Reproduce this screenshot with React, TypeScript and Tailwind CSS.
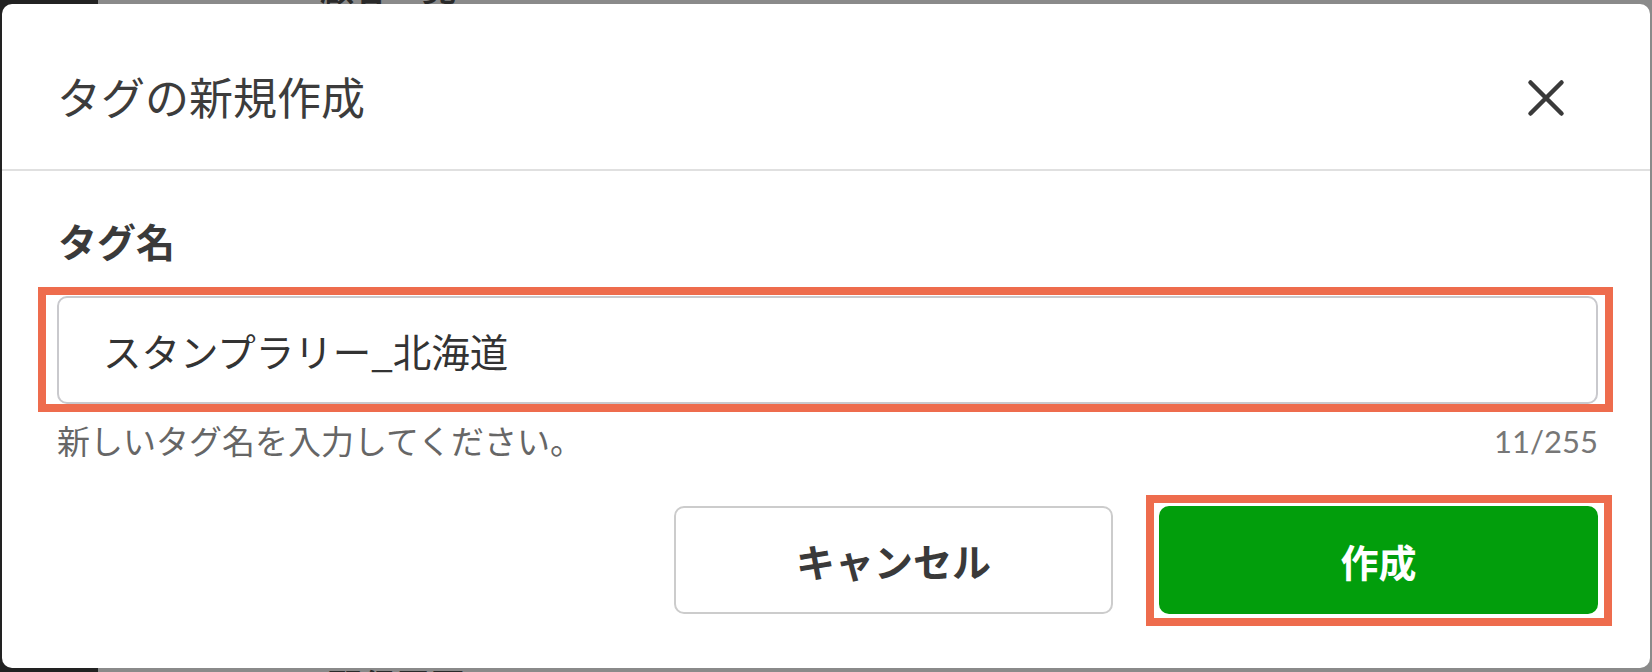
import React from "react";

/**
 * "Create tag" dialog, shown over a dimmed page. The orange frames are
 * review annotations drawn round the input and the primary button.
 */

function CloseIcon() {
  return (
    <svg width="40" height="40" viewBox="0 0 40 40" aria-hidden="true">
      <path
        d="M4.5 4.5 L35.5 35.5 M35.5 4.5 L4.5 35.5"
        stroke="#3a3a3a"
        strokeWidth="4.5"
        strokeLinecap="round"
        fill="none"
      />
    </svg>
  );
}

export default function App() {
  const value = "スタンプラリー_北海道";

  return (
    <div className="relative h-[672px] w-[1652px] overflow-hidden font-['Noto_Sans_CJK_JP','Noto_Sans',sans-serif]">
      {/* dimmed page behind the dialog */}
      <div className="flex h-full">
        <div className="w-[98px] bg-[#222222]" />
        <div className="flex flex-1 flex-col justify-between bg-[#8a8a8a]">
          <div className="-mt-[30px] flex pl-[222px] text-[34px] font-bold leading-none text-[#2a2a2a]">
            <span>顧客一覧</span>
          </div>
          <div className="-mb-[30px] flex pl-[230px] text-[34px] font-bold leading-none text-[#2a2a2a]">
            <span>配信履歴</span>
          </div>
        </div>
      </div>

      {/* dialog */}
      <div className="absolute left-[2px] top-[4px] flex h-[664px] w-[1648px] flex-col rounded-[10px] bg-white">
        <header className="flex h-[167px] shrink-0 items-center justify-between border-b-2 border-[#e0e0e0] pl-[55px] pr-[84px] pt-[12px]">
          <h2 className="mt-[6px] text-[44px] font-normal leading-none text-[#3c3c3c]">
            タグの新規作成
          </h2>
          <button type="button" className="mt-[10px] flex items-center justify-center">
            <CloseIcon />
          </button>
        </header>

        <div className="flex flex-1 flex-col pl-[55px] pr-[52px] pt-[50px]">
          <label className="pl-[1px] text-[39px] font-bold leading-none text-[#3a3a3a]">
            タグ名
          </label>

          <div className="relative mt-[36px]">
            <input
              readOnly
              value={value}
              className="block h-[108px] w-full rounded-[10px] border-2 border-[#c9c9cd] bg-white pl-[44px] text-[38.5px] text-[#333333] outline-none"
            />
            <span className="pointer-events-none absolute -bottom-[8px] -left-[19px] -right-[15px] -top-[9px] border-[8px] border-[#ee6c4d]" />
          </div>

          <div className="mt-[20px] flex items-start justify-between">
            <p className="text-[33px] leading-none text-[#666666]">
              新しいタグ名を入力してください。
            </p>
            <span className="mt-[2px] font-['Lato','Noto_Sans',sans-serif] text-[31px] leading-none text-[#777777]">
              {value.length}/255
            </span>
          </div>

          <div className="mt-[49px] flex justify-end gap-[46px]">
            <button
              type="button"
              className="flex h-[108px] w-[439px] items-center justify-center rounded-[10px] border-2 border-[#cccccc] bg-white text-[39px] font-bold text-[#3a3a3a]"
            >
              キャンセル
            </button>
            <div className="relative">
              <button
                type="button"
                className="flex h-[108px] w-[439px] items-center justify-center rounded-[10px] bg-[#029e0c] text-[38px] font-bold text-white"
              >
                作成
              </button>
              <span className="pointer-events-none absolute -bottom-[12px] -left-[13px] -right-[14px] -top-[11px] border-[8px] border-[#ee6c4d]" />
            </div>
          </div>
        </div>
      </div>
    </div>
  );
}
